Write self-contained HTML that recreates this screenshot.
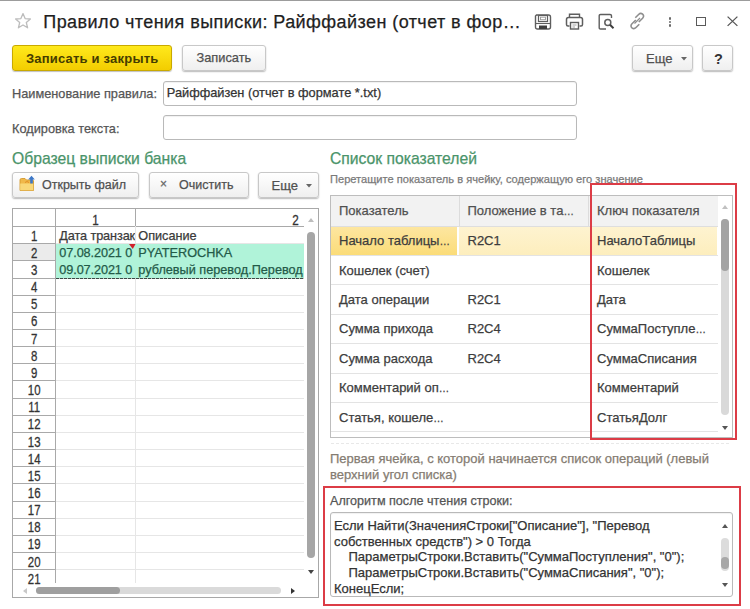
<!DOCTYPE html>
<html><head><meta charset="utf-8">
<style>
*{box-sizing:border-box;margin:0;padding:0}
html,body{width:750px;height:609px;overflow:hidden;background:#fff}
body{position:relative;font-family:"Liberation Sans",sans-serif;color:#333;-webkit-text-stroke:0.25px currentColor}
.a{position:absolute;white-space:nowrap}
.t{position:absolute;white-space:nowrap;line-height:1}
.btn{position:absolute;border:1px solid #c8c8c8;border-radius:3px;background:linear-gradient(#ffffff,#efefef);box-shadow:0 1px 1.5px rgba(0,0,0,.28)}
.yb{position:absolute;border:1px solid #c9a900;border-radius:3px;background:linear-gradient(#ffe91c,#f3cd00);box-shadow:0 1px 1px rgba(0,0,0,.25)}
.inp{position:absolute;border:1px solid #b9b9b9;border-radius:3px;background:#fff;box-shadow:inset 0 1px 1px rgba(0,0,0,.06)}
.lbl{font-size:12.75px;color:#555}
.grn{font-size:15.7px;color:#4a946a}
.red{position:absolute;border:2px solid #dc3c46}
</style></head><body>
<!-- top line -->
<div class="a" style="left:0;top:0;width:750px;height:1px;background:#9c9c9c"></div>

<!-- star -->
<svg class="a" style="left:14.3px;top:12.3px" width="18" height="18" viewBox="0 0 18 18"><path d="M9 1.6 L11.1 6.6 L16.4 7 L12.3 10.5 L13.6 15.8 L9 13 L4.4 15.8 L5.7 10.5 L1.6 7 L6.9 6.6 Z" fill="none" stroke="#bdbdbd" stroke-width="1.3" stroke-linejoin="round"/></svg>

<!-- title -->
<div class="t" style="left:43.3px;top:12.8px;font-size:18px;color:#1e1e1e;letter-spacing:0.43px;-webkit-text-stroke:0.25px #1e1e1e">Правило чтения выписки: Райффайзен (отчет в фор…</div>

<!-- header icons -->
<svg class="a" style="left:534px;top:14px" width="18" height="16" viewBox="0 0 18 16">
 <path d="M2.5 1 H14.5 Q16.5 1 16.5 3 V13 Q16.5 15 14.5 15 H3.5 Q1.5 15 1.5 13 V2 Z" fill="none" stroke="#5e5e5e" stroke-width="1.4"/>
 <rect x="4.5" y="1.5" width="9" height="6" fill="none" stroke="#5e5e5e" stroke-width="1.2"/>
 <rect x="6.5" y="3.2" width="5" height="2.5" fill="none" stroke="#9a9a9a" stroke-width="0.9"/>
 <path d="M1.5 9.5 H16.5" stroke="#5e5e5e" stroke-width="1.1"/>
 <rect x="5" y="11.5" width="8" height="3.5" fill="#3e3e3e"/>
</svg>
<svg class="a" style="left:565px;top:13px" width="19" height="17" viewBox="0 0 19 17">
 <path d="M4.5 4.5 V1.2 H14.5 V4.5" fill="none" stroke="#5e5e5e" stroke-width="1.4"/>
 <path d="M4.5 13 H3 Q1.5 13 1.5 11.5 V6.5 Q1.5 4.5 3.5 4.5 H15.5 Q17.5 4.5 17.5 6.5 V11.5 Q17.5 13 16 13 H14.5" fill="none" stroke="#5e5e5e" stroke-width="1.5"/>
 <rect x="5.5" y="9.5" width="8" height="6.5" fill="none" stroke="#5e5e5e" stroke-width="1.4"/>
 <path d="M7.5 12 H11.5 M7.5 14 H10" stroke="#9a9a9a" stroke-width="0.9"/>
</svg>
<svg class="a" style="left:598px;top:13px" width="18" height="18" viewBox="0 0 18 18">
 <path d="M8 16 H2.5 Q1.2 16 1.2 14.8 V2.8 Q1.2 1.5 2.5 1.5 H12 Q13.5 1.5 13.5 2.8 V5" fill="none" stroke="#5e5e5e" stroke-width="1.4"/>
 <circle cx="9.8" cy="9.5" r="3" fill="none" stroke="#5e5e5e" stroke-width="1.5"/>
 <path d="M12 11.7 L15.5 15.2" stroke="#3e3e3e" stroke-width="2"/>
</svg>
<svg class="a" style="left:628px;top:12px" width="19" height="18" viewBox="0 0 19 18">
 <path d="M6.5 11.5 L12 6" stroke="#8e8e8e" stroke-width="1.3"/>
 <path d="M7.8 8 L4 11.8 Q2 14 4 15.8 Q6 17.5 8 15.5 L11.3 12.2" fill="none" stroke="#8e8e8e" stroke-width="1.6"/>
 <path d="M10.8 10 L14.6 6.2 Q16.6 4 14.6 2.2 Q12.6 0.5 10.6 2.5 L7.3 5.8" fill="none" stroke="#8e8e8e" stroke-width="1.6"/>
</svg>
<div class="a" style="left:668.6px;top:16.8px;width:2.8px;height:2.8px;background:#6a6a6a;border-radius:50%"></div>
<div class="a" style="left:668.6px;top:20.6px;width:2.8px;height:2.8px;background:#6a6a6a;border-radius:50%"></div>
<div class="a" style="left:668.6px;top:24.4px;width:2.8px;height:2.8px;background:#6a6a6a;border-radius:50%"></div>
<div class="a" style="left:696px;top:17px;width:9.5px;height:9px;border:1.5px solid #5a5a5a"></div>
<svg class="a" style="left:726.5px;top:16px" width="11" height="10.5" viewBox="0 0 11 10.5"><path d="M0.6 0.6 L10.4 9.9 M10.4 0.6 L0.6 9.9" stroke="#555" stroke-width="1.3"/></svg>

<!-- command bar -->
<div class="yb" style="left:12px;top:45px;width:160px;height:25.5px"></div>
<div class="t" style="left:26px;top:52px;font-size:13px;font-weight:bold;color:#453c00;letter-spacing:0.2px;-webkit-text-stroke:0">Записать и закрыть</div>
<div class="btn" style="left:182px;top:45px;width:83.5px;height:25.5px"></div>
<div class="t" style="left:196.5px;top:52px;font-size:12.8px;color:#505050">Записать</div>
<div class="btn" style="left:632px;top:45px;width:61px;height:25.6px"></div>
<div class="t" style="left:646px;top:52px;font-size:13px;color:#505050">Еще</div>
<svg class="a" style="left:680.5px;top:57px" width="6" height="4"><path d="M0 0 H6 L3 3.5 Z" fill="#666"/></svg>
<div class="btn" style="left:702px;top:45px;width:30.5px;height:25.6px"></div>
<div class="t" style="left:714px;top:51.5px;font-size:14.5px;font-weight:bold;color:#333;-webkit-text-stroke:0">?</div>

<!-- fields -->
<div class="t lbl" style="left:12px;top:88.3px">Наименование правила:</div>
<div class="inp" style="left:163px;top:80.7px;width:414px;height:25px"></div>
<div class="t" style="left:166.8px;top:87px;font-size:12.8px;color:#333">Райффайзен (отчет в формате *.txt)</div>
<div class="t lbl" style="left:12px;top:122.5px">Кодировка текста:</div>
<div class="inp" style="left:163px;top:114.7px;width:414px;height:25.5px"></div>

<!-- LEFT PANEL -->
<div class="t grn" style="left:12px;top:151px">Образец выписки банка</div>

<div class="btn" style="left:12px;top:172px;width:127px;height:25.8px"></div>
<svg class="a" style="left:19px;top:175px" width="17" height="17" viewBox="0 0 17 17">
 <path d="M1 5 Q1 3.5 2.5 3.5 H6 L7.5 5 H13.5 Q14.5 5 14.5 6 V15.5 H1 Z" fill="#f0b94a" stroke="#d49a2e" stroke-width="0.9"/>
 <path d="M1.2 8.5 H14.3 V15.3 H1.2 Z" fill="#f9d878"/>
 <path d="M6 7.5 L8 6.5 L10 7.5" fill="none" stroke="#e08a20" stroke-width="0.9"/>
 <path d="M12.5 0.8 L15.8 4.5 H13.8 V8.5 H11.2 V4.5 H9.2 Z" fill="#3d78c8"/>
</svg>
<div class="t" style="left:42px;top:179px;font-size:12.5px;color:#505050">Открыть файл</div>
<div class="btn" style="left:149px;top:172px;width:99.5px;height:25.8px"></div>
<div class="t" style="left:160px;top:178px;font-size:12px;color:#666">×</div>
<div class="t" style="left:179px;top:179px;font-size:12.5px;color:#505050">Очистить</div>
<div class="btn" style="left:258px;top:172px;width:61px;height:25.8px"></div>
<div class="t" style="left:271.5px;top:179px;font-size:13px;color:#505050">Еще</div>
<svg class="a" style="left:306px;top:184px" width="6" height="4"><path d="M0 0 H6 L3 3.5 Z" fill="#666"/></svg>

<!-- sheet -->
<div class="a" style="left:12px;top:208px;width:307px;height:390px;border:1px solid #a8a8a8;background:#fff"></div>
<div class="a" style="left:13px;top:243.25px;width:42.3px;height:17.15px;background:#ebebeb"></div>
<div class="a" style="left:55.3px;top:243.25px;width:248.7px;height:1px;background:#e6e6e6"></div>
<div class="a" style="left:13px;top:243.25px;width:42.3px;height:1px;background:#a9a9a9"></div>
<div class="a" style="left:55.3px;top:260.4px;width:248.7px;height:1px;background:#e6e6e6"></div>
<div class="a" style="left:13px;top:260.4px;width:42.3px;height:1px;background:#a9a9a9"></div>
<div class="a" style="left:55.3px;top:277.55px;width:248.7px;height:1px;background:#e6e6e6"></div>
<div class="a" style="left:13px;top:277.55px;width:42.3px;height:1px;background:#a9a9a9"></div>
<div class="a" style="left:55.3px;top:294.7px;width:248.7px;height:1px;background:#e6e6e6"></div>
<div class="a" style="left:13px;top:294.7px;width:42.3px;height:1px;background:#a9a9a9"></div>
<div class="a" style="left:55.3px;top:311.85px;width:248.7px;height:1px;background:#e6e6e6"></div>
<div class="a" style="left:13px;top:311.85px;width:42.3px;height:1px;background:#a9a9a9"></div>
<div class="a" style="left:55.3px;top:329px;width:248.7px;height:1px;background:#e6e6e6"></div>
<div class="a" style="left:13px;top:329px;width:42.3px;height:1px;background:#a9a9a9"></div>
<div class="a" style="left:55.3px;top:346.15px;width:248.7px;height:1px;background:#e6e6e6"></div>
<div class="a" style="left:13px;top:346.15px;width:42.3px;height:1px;background:#a9a9a9"></div>
<div class="a" style="left:55.3px;top:363.3px;width:248.7px;height:1px;background:#e6e6e6"></div>
<div class="a" style="left:13px;top:363.3px;width:42.3px;height:1px;background:#a9a9a9"></div>
<div class="a" style="left:55.3px;top:380.45px;width:248.7px;height:1px;background:#e6e6e6"></div>
<div class="a" style="left:13px;top:380.45px;width:42.3px;height:1px;background:#a9a9a9"></div>
<div class="a" style="left:55.3px;top:397.6px;width:248.7px;height:1px;background:#e6e6e6"></div>
<div class="a" style="left:13px;top:397.6px;width:42.3px;height:1px;background:#a9a9a9"></div>
<div class="a" style="left:55.3px;top:414.75px;width:248.7px;height:1px;background:#e6e6e6"></div>
<div class="a" style="left:13px;top:414.75px;width:42.3px;height:1px;background:#a9a9a9"></div>
<div class="a" style="left:55.3px;top:431.9px;width:248.7px;height:1px;background:#e6e6e6"></div>
<div class="a" style="left:13px;top:431.9px;width:42.3px;height:1px;background:#a9a9a9"></div>
<div class="a" style="left:55.3px;top:449.05px;width:248.7px;height:1px;background:#e6e6e6"></div>
<div class="a" style="left:13px;top:449.05px;width:42.3px;height:1px;background:#a9a9a9"></div>
<div class="a" style="left:55.3px;top:466.2px;width:248.7px;height:1px;background:#e6e6e6"></div>
<div class="a" style="left:13px;top:466.2px;width:42.3px;height:1px;background:#a9a9a9"></div>
<div class="a" style="left:55.3px;top:483.35px;width:248.7px;height:1px;background:#e6e6e6"></div>
<div class="a" style="left:13px;top:483.35px;width:42.3px;height:1px;background:#a9a9a9"></div>
<div class="a" style="left:55.3px;top:500.5px;width:248.7px;height:1px;background:#e6e6e6"></div>
<div class="a" style="left:13px;top:500.5px;width:42.3px;height:1px;background:#a9a9a9"></div>
<div class="a" style="left:55.3px;top:517.65px;width:248.7px;height:1px;background:#e6e6e6"></div>
<div class="a" style="left:13px;top:517.65px;width:42.3px;height:1px;background:#a9a9a9"></div>
<div class="a" style="left:55.3px;top:534.8px;width:248.7px;height:1px;background:#e6e6e6"></div>
<div class="a" style="left:13px;top:534.8px;width:42.3px;height:1px;background:#a9a9a9"></div>
<div class="a" style="left:55.3px;top:551.95px;width:248.7px;height:1px;background:#e6e6e6"></div>
<div class="a" style="left:13px;top:551.95px;width:42.3px;height:1px;background:#a9a9a9"></div>
<div class="a" style="left:55.3px;top:569.1px;width:248.7px;height:1px;background:#e6e6e6"></div>
<div class="a" style="left:13px;top:569.1px;width:42.3px;height:1px;background:#a9a9a9"></div>
<div class="a" style="left:56px;top:243.5px;width:248px;height:34.05px;background:#b0f3d9"></div>
<div class="a" style="left:56.3px;top:277.55px;width:247.7px;height:1px;background:repeating-linear-gradient(90deg,#3a4a45 0 3px,rgba(0,0,0,.15) 3px 4px)"></div>
<div class="a" style="left:13px;top:226.1px;width:291px;height:1px;background:#a9a9a9"></div>
<div class="a" style="left:55.3px;top:209px;width:1px;height:374px;background:#a9a9a9"></div>
<div class="a" style="left:134.8px;top:209px;width:1px;height:17.1px;background:#a9a9a9"></div>
<div class="a" style="left:134.8px;top:226.1px;width:1px;height:17.15px;background:#e6e6e6"></div>
<div class="a" style="left:134.8px;top:278.55px;width:1px;height:304.45px;background:#e6e6e6"></div>
<div class="t" style="left:92px;top:212.5px;font-size:13px;color:#333;transform:scale(0.9,1.14)">1</div>
<div class="t" style="left:291.5px;top:212.5px;font-size:13px;color:#333;transform:scale(0.9,1.14)">2</div>
<div class="t" style="left:13px;width:42.3px;text-align:center;top:228.7px;font-size:13px;color:#333;transform:scale(0.88,1.14)">1</div>
<div class="t" style="left:13px;width:42.3px;text-align:center;top:245.85px;font-size:13px;color:#333;transform:scale(0.88,1.14)">2</div>
<div class="t" style="left:13px;width:42.3px;text-align:center;top:263px;font-size:13px;color:#333;transform:scale(0.88,1.14)">3</div>
<div class="t" style="left:13px;width:42.3px;text-align:center;top:280.15px;font-size:13px;color:#333;transform:scale(0.88,1.14)">4</div>
<div class="t" style="left:13px;width:42.3px;text-align:center;top:297.3px;font-size:13px;color:#333;transform:scale(0.88,1.14)">5</div>
<div class="t" style="left:13px;width:42.3px;text-align:center;top:314.45px;font-size:13px;color:#333;transform:scale(0.88,1.14)">6</div>
<div class="t" style="left:13px;width:42.3px;text-align:center;top:331.6px;font-size:13px;color:#333;transform:scale(0.88,1.14)">7</div>
<div class="t" style="left:13px;width:42.3px;text-align:center;top:348.75px;font-size:13px;color:#333;transform:scale(0.88,1.14)">8</div>
<div class="t" style="left:13px;width:42.3px;text-align:center;top:365.9px;font-size:13px;color:#333;transform:scale(0.88,1.14)">9</div>
<div class="t" style="left:13px;width:42.3px;text-align:center;top:383.05px;font-size:13px;color:#333;transform:scale(0.88,1.14)">10</div>
<div class="t" style="left:13px;width:42.3px;text-align:center;top:400.2px;font-size:13px;color:#333;transform:scale(0.88,1.14)">11</div>
<div class="t" style="left:13px;width:42.3px;text-align:center;top:417.35px;font-size:13px;color:#333;transform:scale(0.88,1.14)">12</div>
<div class="t" style="left:13px;width:42.3px;text-align:center;top:434.5px;font-size:13px;color:#333;transform:scale(0.88,1.14)">13</div>
<div class="t" style="left:13px;width:42.3px;text-align:center;top:451.65px;font-size:13px;color:#333;transform:scale(0.88,1.14)">14</div>
<div class="t" style="left:13px;width:42.3px;text-align:center;top:468.8px;font-size:13px;color:#333;transform:scale(0.88,1.14)">15</div>
<div class="t" style="left:13px;width:42.3px;text-align:center;top:485.95px;font-size:13px;color:#333;transform:scale(0.88,1.14)">16</div>
<div class="t" style="left:13px;width:42.3px;text-align:center;top:503.1px;font-size:13px;color:#333;transform:scale(0.88,1.14)">17</div>
<div class="t" style="left:13px;width:42.3px;text-align:center;top:520.25px;font-size:13px;color:#333;transform:scale(0.88,1.14)">18</div>
<div class="t" style="left:13px;width:42.3px;text-align:center;top:537.4px;font-size:13px;color:#333;transform:scale(0.88,1.14)">19</div>
<div class="t" style="left:13px;width:42.3px;text-align:center;top:554.55px;font-size:13px;color:#333;transform:scale(0.88,1.14)">20</div>
<div class="t" style="left:13px;width:42.3px;text-align:center;top:571.7px;font-size:13px;color:#333;transform:scale(0.88,1.14)">21</div>
<svg class="a" style="left:128.5px;top:244px" width="7" height="6"><path d="M0 0 H6.5 L3.8 5 Z" fill="#d0202a"/></svg>
<div class="a" style="left:56.3px;top:226.1px;width:247.7px;height:51.45px;overflow:hidden">
<div class="a" style="left:0;top:1.6px;width:78.5px;height:17px;overflow:hidden"><div class="t" style="left:3px;top:2px;font-size:12.7px;letter-spacing:-0.1px;color:#3a3a3a">Дата транзак</div></div>
<div class="t" style="left:82px;top:3.6px;font-size:12.7px;color:#3a3a3a">Описание</div>
<div class="a" style="left:0;top:18.75px;width:78.5px;height:17px;overflow:hidden"><div class="t" style="left:3px;top:2px;font-size:12.7px;letter-spacing:-0.1px;color:#235a48">07.08.2021 0</div></div>
<div class="t" style="left:82px;top:20.75px;font-size:12.7px;color:#235a48">PYATEROCHKA</div>
<div class="a" style="left:0;top:35.9px;width:78.5px;height:17px;overflow:hidden"><div class="t" style="left:3px;top:2px;font-size:12.7px;letter-spacing:-0.1px;color:#235a48">09.07.2021 0</div></div>
<div class="t" style="left:82px;top:37.9px;font-size:12.7px;color:#235a48">рублевый перевод.Перевод собственных средств</div>
</div>
<svg class="a" style="left:308px;top:218px" width="6" height="4"><path d="M0 4 H6 L3 0 Z" fill="#bdbdbd"/></svg>
<div class="a" style="left:307px;top:232px;width:8px;height:326px;background:#a6a6a6;border-radius:4px"></div>
<svg class="a" style="left:308px;top:570px" width="6" height="4"><path d="M0 0 H6 L3 4 Z" fill="#444"/></svg>
<svg class="a" style="left:22.5px;top:587.5px" width="4" height="6"><path d="M4 0 V6 L0 3 Z" fill="#c8c8c8"/></svg>
<div class="a" style="left:36px;top:587px;width:245px;height:7px;background:#dadada;border-radius:4px"></div>
<div class="a" style="left:36px;top:587px;width:84px;height:7px;background:#9f9f9f;border-radius:4px"></div>
<svg class="a" style="left:290.5px;top:587.5px" width="4" height="6"><path d="M0 0 V6 L4 3 Z" fill="#333"/></svg>

<!-- RIGHT PANEL -->
<div class="t grn" style="left:330px;top:151px">Список показателей</div>
<div class="t" style="left:330px;top:174px;font-size:11.1px;color:#7a7a7a">Перетащите показатель в ячейку, содержащую его значение</div>

<div class="a" style="left:330px;top:195px;width:403px;height:243px;border:1px solid #bdbdbd;background:#fff"></div>
<div class="a" style="left:331px;top:196px;width:386.5px;height:29.5px;background:#f2f2f2"></div>
<div class="a" style="left:331px;top:225.5px;width:386.5px;height:1px;background:#dedede"></div>
<div class="a" style="left:458.8px;top:196px;width:1px;height:29.5px;background:#dcdcdc"></div>
<div class="a" style="left:588.3px;top:196px;width:1px;height:29.5px;background:#dcdcdc"></div>
<div class="a" style="left:331px;top:227px;width:126.3px;height:27.8px;background:linear-gradient(#fde6a0,#fbdc78)"></div>
<div class="a" style="left:458.8px;top:227px;width:258.7px;height:27.8px;background:linear-gradient(#fef3d0,#fdeebd)"></div>
<div class="a" style="left:331px;top:254.9px;width:386.5px;height:1px;background:#e3e3e3"></div>
<div class="a" style="left:331px;top:284.3px;width:386.5px;height:1px;background:#e3e3e3"></div>
<div class="a" style="left:331px;top:313.7px;width:386.5px;height:1px;background:#e3e3e3"></div>
<div class="a" style="left:331px;top:343.1px;width:386.5px;height:1px;background:#e3e3e3"></div>
<div class="a" style="left:331px;top:372.5px;width:386.5px;height:1px;background:#e3e3e3"></div>
<div class="a" style="left:331px;top:401.9px;width:386.5px;height:1px;background:#e3e3e3"></div>
<div class="a" style="left:331px;top:431.3px;width:386.5px;height:1px;background:#e3e3e3"></div>
<div class="t" style="left:339px;top:203.8px;font-size:13px;color:#505050">Показатель</div>
<div class="t" style="left:467.5px;top:203.8px;font-size:13px;color:#505050">Положение в та<span style="font-size:10.5px;letter-spacing:-0.3px">…</span></div>
<div class="t" style="left:597px;top:203.8px;font-size:13px;color:#505050">Ключ показателя</div>
<div class="t" style="left:339px;top:234.2px;font-size:13px;color:#3d3d3d">Начало таблицы<span style="font-size:10.5px;letter-spacing:-0.3px">…</span></div>
<div class="t" style="left:467.5px;top:234.2px;font-size:13px;color:#3d3d3d">R2C1</div>
<div class="t" style="left:597px;top:234.2px;font-size:13px;color:#3d3d3d">НачалоТаблицы</div>
<div class="t" style="left:339px;top:263.6px;font-size:13px;color:#3d3d3d">Кошелек (счет)</div>
<div class="t" style="left:597px;top:263.6px;font-size:13px;color:#3d3d3d">Кошелек</div>
<div class="t" style="left:339px;top:293px;font-size:13px;color:#3d3d3d">Дата операции</div>
<div class="t" style="left:467.5px;top:293px;font-size:13px;color:#3d3d3d">R2C1</div>
<div class="t" style="left:597px;top:293px;font-size:13px;color:#3d3d3d">Дата</div>
<div class="t" style="left:339px;top:322.4px;font-size:13px;color:#3d3d3d">Сумма прихода</div>
<div class="t" style="left:467.5px;top:322.4px;font-size:13px;color:#3d3d3d">R2C4</div>
<div class="t" style="left:597px;top:322.4px;font-size:13px;color:#3d3d3d">СуммаПоступле<span style="font-size:10.5px;letter-spacing:-0.3px">…</span></div>
<div class="t" style="left:339px;top:351.8px;font-size:13px;color:#3d3d3d">Сумма расхода</div>
<div class="t" style="left:467.5px;top:351.8px;font-size:13px;color:#3d3d3d">R2C4</div>
<div class="t" style="left:597px;top:351.8px;font-size:13px;color:#3d3d3d">СуммаСписания</div>
<div class="t" style="left:339px;top:381.2px;font-size:13px;color:#3d3d3d">Комментарий оп<span style="font-size:10.5px;letter-spacing:-0.3px">…</span></div>
<div class="t" style="left:597px;top:381.2px;font-size:13px;color:#3d3d3d">Комментарий</div>
<div class="t" style="left:339px;top:410.6px;font-size:13px;color:#3d3d3d">Статья, кошеле<span style="font-size:10.5px;letter-spacing:-0.3px">…</span></div>
<div class="t" style="left:597px;top:410.6px;font-size:13px;color:#3d3d3d">СтатьяДолг</div>
<svg class="a" style="left:722px;top:205px" width="6" height="4"><path d="M0 4 H6 L3 0 Z" fill="#c0c0c0"/></svg>
<div class="a" style="left:721px;top:219px;width:7.5px;height:196px;background:#d9d9d9;border-radius:4px"></div>
<div class="a" style="left:721px;top:219px;width:7.5px;height:52px;background:#a3a3a3;border-radius:4px"></div>
<svg class="a" style="left:722px;top:425.5px" width="6" height="4"><path d="M0 0 H6 L3 4 Z" fill="#555"/></svg>

<div class="a" style="left:331px;top:442.5px;width:400px;height:1px;background:repeating-linear-gradient(90deg,#e8e8e8 0 3px,transparent 3px 5px)"></div>
<div class="red" style="left:590px;top:183px;width:147px;height:257px"></div>

<div class="t" style="left:330px;top:451px;font-size:13px;color:#857c72;line-height:15.6px;white-space:normal;width:400px">Первая ячейка, с которой начинается список операций (левый<br>верхний угол списка)</div>

<div class="red" style="left:323px;top:486px;width:418px;height:120px"></div>
<div class="t lbl" style="left:330px;top:495px;font-size:12.6px">Алгоритм после чтения строки:</div>
<div class="inp" style="left:329.5px;top:512.3px;width:403.5px;height:85px"></div>
<div class="a" style="left:334px;top:517.8px;font-size:13px;line-height:15.8px;color:#333;white-space:pre">Если Найти(ЗначенияСтроки["Описание"], "Перевод
собственных средств") &gt; 0 Тогда
    ПараметрыСтроки.Вставить("СуммаПоступления", "0");
    ПараметрыСтроки.Вставить("СуммаСписания", "0");
КонецЕсли;</div>
<svg class="a" style="left:722px;top:523.5px" width="6" height="4"><path d="M0 4 H6 L3 0 Z" fill="#555"/></svg>
<div class="a" style="left:721px;top:538px;width:8px;height:33px;background:#dcdcdc;border-radius:4px"></div>
<div class="a" style="left:721px;top:557px;width:8px;height:12px;background:#a8a8a8;border-radius:4px"></div>
<svg class="a" style="left:722px;top:583px" width="6" height="4"><path d="M0 0 H6 L3 4 Z" fill="#555"/></svg>

</body></html>
